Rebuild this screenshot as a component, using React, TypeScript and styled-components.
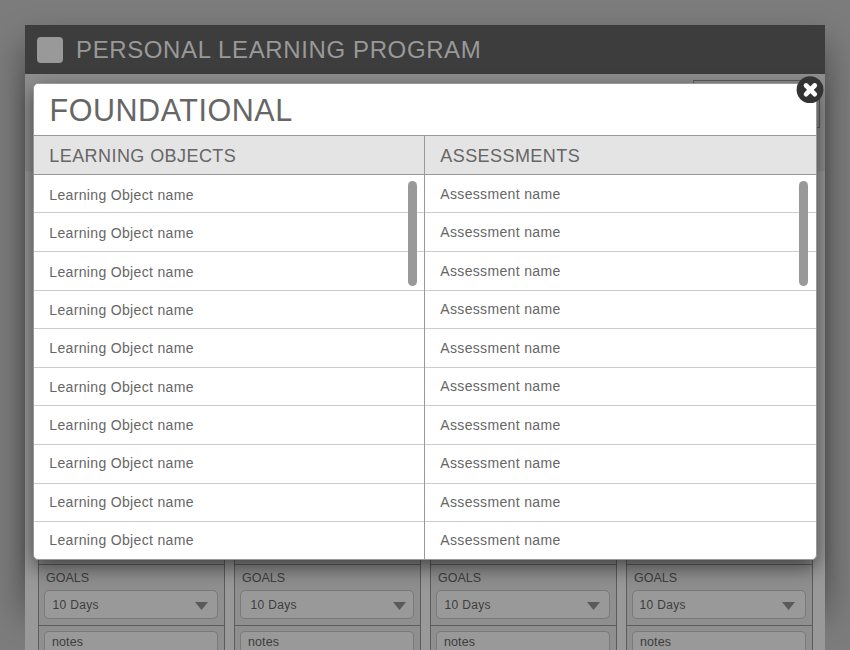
import React from "react";
import styled, { createGlobalStyle } from "styled-components";

const GlobalStyle = createGlobalStyle`
  * { box-sizing: border-box; }
  html, body { margin: 0; background: #7c7c7c; }
  body { font-family: "Liberation Sans", Arial, sans-serif; overflow: hidden; }
`;

const Screen = styled.div`
  position: relative;
  width: 850px;
  height: 650px;
  padding: 25px 25px 0;
  overflow: hidden;
  background: #7c7c7c;
`;

/* Soft shadow cast behind the page, fading out near the bottom. */
const PageShadow = styled.div`
  position: absolute;
  left: 29px;
  right: 29px;
  top: 48px;
  height: 562px;
  box-shadow: 0 0 34px 3px rgba(0, 0, 0, 0.45);
`;

const Page = styled.div`
  position: relative;
  display: flex;
  flex-direction: column;
  height: 625px;
  background: #999;
`;

const TopBar = styled.header`
  position: relative;
  display: flex;
  align-items: center;
  flex: 0 0 49px;
  padding-left: 12px;
  gap: 13px;
  background: #3d3d3d;
`;

const Logo = styled.div`
  width: 26px;
  height: 26px;
  border-radius: 4px;
  background: #999;
`;

const PageTitle = styled.h1`
  margin: 0;
  font-size: 24px;
  font-weight: 400;
  line-height: 28px;
  letter-spacing: 0.62px;
  color: #999;
  white-space: nowrap;
`;

const Summary = styled.section`
  display: flex;
  justify-content: flex-end;
  flex: 0 0 97px;
  padding: 6px 5px 0;
  background: #8f8f8f;
`;

const SummaryBox = styled.div`
  width: 127px;
  height: 48px;
  border: 1px solid #5c5c5c;
`;

const Board = styled.section`
  display: flex;
  align-items: flex-end;
  flex: 1;
  gap: 9px;
  padding-left: 13px;
`;

const Column = styled.div`
  width: 187px;
  height: 90px;
  border: 1px solid #5c5c5c;
  border-width: 0 1px;
  background: #8f8f8f;
`;

const Goals = styled.div`
  height: 62px;
  margin-top: 4px;
  padding: 6px 6px 0 5px;
  border: 1px solid #5c5c5c;
  border-width: 1px 0;
`;

const Label = styled.div`
  height: 19px;
  padding-left: 2px;
  font-size: 12.5px;
  line-height: 15px;
  color: #3d3d3d;
`;

const Field = styled.div<{ $indent: number }>`
  display: flex;
  align-items: center;
  justify-content: space-between;
  height: 29px;
  padding: 0 9px 0 ${(p) => p.$indent}px;
  border: 1px solid #7a7a7a;
  border-radius: 5px;
  background: #999;
  font-size: 12px;
  letter-spacing: 0.33px;
  color: #3d3d3d;
`;

const Notes = styled.div`
  height: 24px;
  margin: 5px 6px 0 5px;
  padding: 3px 7px 0;
  border: 1px solid #7a7a7a;
  border-bottom: 0;
  border-radius: 5px 5px 0 0;
  background: #999;
  font-size: 12.5px;
  line-height: 14px;
  letter-spacing: 0.1px;
  color: #3d3d3d;
`;

const Triangle = styled.svg<{ $shift: number }>`
  width: 13px;
  height: 8px;
  margin: 2px ${(p) => p.$shift}px 0 0;
  fill: #5a5a5a;
`;

const Dialog = styled.div`
  position: absolute;
  z-index: 1;
  left: 33px;
  top: 83px;
  width: 784px;
  height: 477px;
  border: 1px solid #999;
  border-radius: 5px;
  background: #fff;
  box-shadow: 0 7px 20px rgba(0, 0, 0, 0.55);
  color: #666;
`;

const DialogTitle = styled.h2`
  height: 52px;
  margin: 0;
  padding: 9px 0 0 15.5px;
  border-bottom: 1px solid #999;
  font-size: 30.5px;
  font-weight: 400;
  line-height: 34px;
  letter-spacing: 0.55px;
`;

const Lists = styled.div`
  display: flex;
`;

const List = styled.section<{ $width: number; $divider?: boolean }>`
  position: relative;
  width: ${(p) => p.$width}px;
  border-right: ${(p) => (p.$divider ? "1px solid #999" : "0")};
`;

const ListHeading = styled.h3`
  height: 39px;
  margin: 0;
  padding-left: 15.3px;
  border-bottom: 1px solid #999;
  background: #e4e4e4;
  font-size: 18px;
  font-weight: 400;
  line-height: 40px;
  letter-spacing: 0.43px;
`;

const Row = styled.div<{ $height: number; $top: number }>`
  height: ${(p) => p.$height}px;
  padding: ${(p) => p.$top}px 0 0 15.3px;
  border-bottom: 1px solid #ccc;
  font-size: 14px;
  line-height: 16px;
  letter-spacing: 0.34px;
  &:last-of-type { border-bottom: 0; }
`;

const ScrollThumb = styled.span<{ $right: number }>`
  position: absolute;
  top: 45px;
  right: ${(p) => p.$right}px;
  width: 9px;
  height: 105px;
  border-radius: 5px;
  background: #999;
`;

const CloseButton = styled.button`
  position: absolute;
  z-index: 3;
  left: 796px;
  top: 76px;
  width: 28px;
  height: 28px;
  padding: 0;
  border: 0;
  background: none;
  svg { display: block; }
`;

const rowHeights = [38, 39, 39, 38, 39, 38, 39, 39, 38, 37];

const lists = [
  {
    heading: "LEARNING OBJECTS",
    item: "Learning Object name",
    offsets: [12, 12, 12, 11, 11, 11, 11, 10, 10, 10],
    thumbRight: 7,
  },
  {
    heading: "ASSESSMENTS",
    item: "Assessment name",
    offsets: [11, 11, 11, 10, 11, 10, 11, 10, 10, 10],
    thumbRight: 8,
  },
];

const goals = [
  { indent: 7.5, shift: 0 },
  { indent: 9.5, shift: -2 },
  { indent: 7.5, shift: 0 },
  { indent: 6.5, shift: 1 },
];

export default function App() {
  return (
    <Screen>
      <GlobalStyle />
      <PageShadow />
      <Page>
        <TopBar>
          <Logo />
          <PageTitle>PERSONAL LEARNING PROGRAM</PageTitle>
        </TopBar>
        <Summary>
          <SummaryBox />
        </Summary>
        <Board>
          {goals.map((g, i) => (
            <Column key={i}>
              <Goals>
                <Label>GOALS</Label>
                <Field $indent={g.indent}>
                  10 Days
                  <Triangle $shift={g.shift} viewBox="0 0 13 8">
                    <path d="M0 0H13L6.5 8Z" />
                  </Triangle>
                </Field>
              </Goals>
              <Notes>notes</Notes>
            </Column>
          ))}
        </Board>
      </Page>
      <Dialog role="dialog">
        <DialogTitle>FOUNDATIONAL</DialogTitle>
        <Lists>
          {lists.map((list, n) => (
            <List key={list.heading} $width={391} $divider={n === 0}>
              <ListHeading>{list.heading}</ListHeading>
              {rowHeights.map((h, i) => (
                <Row key={i} $height={h} $top={list.offsets[i]}>{list.item}</Row>
              ))}
              <ScrollThumb $right={list.thumbRight} />
            </List>
          ))}
        </Lists>
      </Dialog>
      <CloseButton aria-label="Close">
        <svg width="28" height="28" viewBox="0 0 28 28">
          <circle cx="14" cy="13.7" r="13.4" fill="#333" />
          <path d="M10.1 9.5L18.7 18.1M18.7 9.5L10.1 18.1" stroke="#fff" strokeWidth="4.8" strokeLinecap="round" />
        </svg>
      </CloseButton>
    </Screen>
  );
}
